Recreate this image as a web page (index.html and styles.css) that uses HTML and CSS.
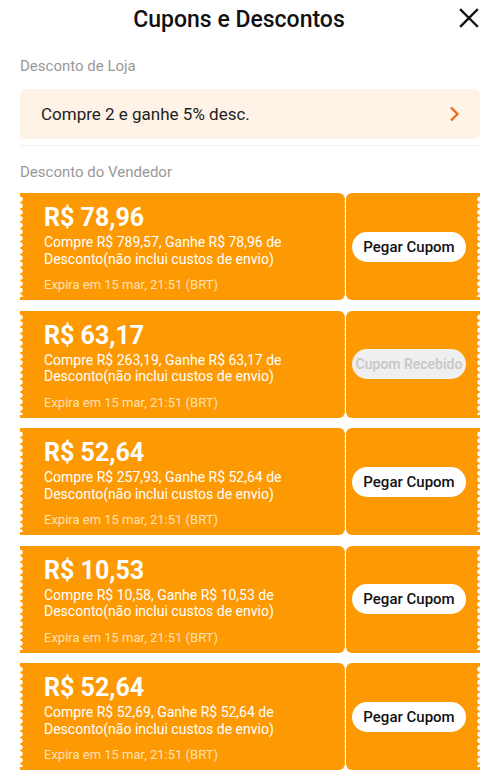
FILE: index.html
```html
<!DOCTYPE html>
<html lang="pt-BR">

<head>
  <meta charset="UTF-8">
  <title>Cupons e Descontos</title>
  <link rel="stylesheet" href="styles.css">
</head>

<body>

  <header class="topbar">
    <h1>Cupons e Descontos</h1>
    <button class="close" aria-label="Fechar">
      <svg width="20" height="20" viewBox="0 0 20 20">
        <path d="M2 2 L18 18 M18 2 L2 18" stroke="#111" stroke-width="2.4" stroke-linecap="square" fill="none" />
      </svg>
    </button>
  </header>

  <section class="section">
    <div class="label">Desconto de Loja</div>
    <div class="store-offer">
      <span>Compre 2 e ganhe 5% desc.</span>
      <svg width="12" height="18" viewBox="0 0 12 18">
        <path d="M3 2.5 L9.5 9 L3 15.5" stroke="#f26a1b" stroke-width="2.4" fill="none" />
      </svg>
    </div>
  </section>

  <section class="section seller">
    <div class="label">Desconto do Vendedor</div>

    <div class="coupon">
      <div class="coupon-main">
        <div class="amount">R$ 78,96</div>
        <div class="desc">Compre R$ 789,57, Ganhe R$ 78,96 de Desconto(não inclui custos de envio)</div>
        <div class="expire">Expira em 15 mar, 21:51 (BRT)</div>
      </div>
      <div class="coupon-side">
        <button class="grab">Pegar Cupom</button>
      </div>
    </div>

    <div class="coupon">
      <div class="coupon-main">
        <div class="amount">R$ 63,17</div>
        <div class="desc">Compre R$ 263,19, Ganhe R$ 63,17 de Desconto(não inclui custos de envio)</div>
        <div class="expire">Expira em 15 mar, 21:51 (BRT)</div>
      </div>
      <div class="coupon-side">
        <button class="grab received">Cupom Recebido</button>
      </div>
    </div>

    <div class="coupon">
      <div class="coupon-main">
        <div class="amount">R$ 52,64</div>
        <div class="desc">Compre R$ 257,93, Ganhe R$ 52,64 de Desconto(não inclui custos de envio)</div>
        <div class="expire">Expira em 15 mar, 21:51 (BRT)</div>
      </div>
      <div class="coupon-side">
        <button class="grab">Pegar Cupom</button>
      </div>
    </div>

    <div class="coupon">
      <div class="coupon-main">
        <div class="amount">R$ 10,53</div>
        <div class="desc">Compre R$ 10,58, Ganhe R$ 10,53 de Desconto(não inclui custos de envio)</div>
        <div class="expire">Expira em 15 mar, 21:51 (BRT)</div>
      </div>
      <div class="coupon-side">
        <button class="grab">Pegar Cupom</button>
      </div>
    </div>

    <div class="coupon">
      <div class="coupon-main">
        <div class="amount">R$ 52,64</div>
        <div class="desc">Compre R$ 52,69, Ganhe R$ 52,64 de Desconto(não inclui custos de envio)</div>
        <div class="expire">Expira em 15 mar, 21:51 (BRT)</div>
      </div>
      <div class="coupon-side">
        <button class="grab">Pegar Cupom</button>
      </div>
    </div>
  </section>

</body>

</html>
```

FILE: styles.css
```css
* {
  box-sizing: border-box;
}

body {
  margin: 0;
  font-family: Roboto, "Noto Sans", sans-serif;
  background: #ffffff;
  color: #222;
  overflow: hidden;
}

.topbar {
  height: 38px;
  display: flex;
  align-items: center;
  justify-content: center;
  padding-right: 22px;
  position: relative;
}

.topbar h1 {
  margin: 0;
  font-size: 23px;
  font-weight: 500;
  color: #111;
}

.close {
  position: absolute;
  right: 21px;
  top: 8px;
  border: none;
  background: none;
  padding: 0;
  width: 20px;
  height: 20px;
}

.section {
  padding: 0 20px;
}

.label {
  font-size: 15px;
  color: #999;
  padding-top: 19px;
  height: 51px;
}

.store-offer {
  height: 50px;
  background: #fef3e6;
  border-radius: 6px;
  display: flex;
  align-items: center;
  justify-content: space-between;
  padding: 0 20px 0 21px;
  font-size: 17px;
  color: #222;
}

.seller {
  border-top: 1px solid #f0f0f0;
  margin: 6px 20px 0;
  padding: 0;
}

.seller .label {
  padding-top: 17px;
  height: 47px;
}

.coupon {
  display: flex;
  height: 107px;
  margin-bottom: 10.5px;
}

.coupon-main {
  flex: 1;
  position: relative;
  background: #fd9a03;
  border-radius: 0 6px 6px 0;
  border-right: 1px dashed rgba(255, 255, 255, 0.3);
  padding: 11px 0 0 24px;
  color: #fff;
}

.coupon-side {
  width: 134px;
  position: relative;
  background: #fd9a03;
  border-radius: 6px 0 0 6px;
  margin-left: 1px;
  display: flex;
  align-items: center;
  padding-left: 6px;
}

/* scalloped edges */
.coupon-main::before,
.coupon-side::after {
  content: "";
  position: absolute;
  top: 3px;
  bottom: 3px;
  width: 6px;
  background: radial-gradient(circle, #fff 2.4px, transparent 3px) 0 0 / 6px 6.5px repeat-y;
}

.coupon-main::before {
  left: -3px;
}

.coupon-side::after {
  right: -3px;
}

.amount {
  font-size: 25px;
  font-weight: 700;
  line-height: 28px;
}

.desc {
  font-size: 14px;
  line-height: 16.5px;
  margin-top: 2px;
  width: 250px;
}

.expire {
  font-size: 13px;
  line-height: 16px;
  margin-top: 10px;
  color: rgba(255, 255, 255, 0.72);
}

.grab {
  width: 114px;
  height: 30px;
  border: none;
  border-radius: 15px;
  background: #fff;
  color: #111;
  font-family: Roboto, sans-serif;
  font-size: 15px;
  font-weight: 500;
  padding: 0;
}

.grab.received {
  background: #efefef;
  color: #c6c6c6;
  font-size: 14px;
}
```
